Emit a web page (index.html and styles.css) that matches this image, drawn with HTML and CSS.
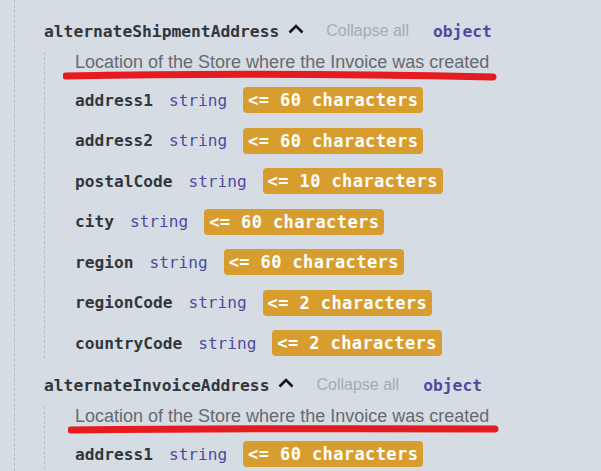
FILE: index.html
```html
<!DOCTYPE html>
<html>
<head>
<meta charset="utf-8">
<link rel="stylesheet" href="styles.css">
</head>
<body>
<div class="tree">
  <section class="prop">
    <div class="prop-head">
      <span class="name">alternateShipmentAddress</span>
      <svg class="chev" width="16" height="10" viewBox="0 0 16 10"><path d="M1.5 8.5 L8 2 L14.5 8.5" fill="none" stroke="#111" stroke-width="2.6"/></svg>
      <span class="collapse">Collapse all</span>
      <span class="type-obj">object</span>
    </div>
    <div class="children">
      <div class="desc">Location of the Store where the Invoice was created
        <svg class="mark" width="450" height="16" viewBox="0 0 450 16"><path d="M3 8 Q 200 4 430 9" fill="none" stroke="#e51b1f" stroke-width="7" stroke-linecap="round"/></svg>
      </div>
      <div class="row"><span class="key">address1</span><span class="type">string</span><span class="badge">&lt;= 60 characters</span></div>
      <div class="row"><span class="key">address2</span><span class="type">string</span><span class="badge">&lt;= 60 characters</span></div>
      <div class="row"><span class="key">postalCode</span><span class="type">string</span><span class="badge">&lt;= 10 characters</span></div>
      <div class="row"><span class="key">city</span><span class="type">string</span><span class="badge">&lt;= 60 characters</span></div>
      <div class="row"><span class="key">region</span><span class="type">string</span><span class="badge">&lt;= 60 characters</span></div>
      <div class="row"><span class="key">regionCode</span><span class="type">string</span><span class="badge">&lt;= 2 characters</span></div>
      <div class="row"><span class="key">countryCode</span><span class="type">string</span><span class="badge">&lt;= 2 characters</span></div>
    </div>
  </section>
  <section class="prop">
    <div class="prop-head">
      <span class="name">alternateInvoiceAddress</span>
      <svg class="chev" width="16" height="10" viewBox="0 0 16 10"><path d="M1.5 8.5 L8 2 L14.5 8.5" fill="none" stroke="#111" stroke-width="2.6"/></svg>
      <span class="collapse">Collapse all</span>
      <span class="type-obj">object</span>
    </div>
    <div class="children">
      <div class="desc">Location of the Store where the Invoice was created
        <svg class="mark mark2" width="450" height="16" viewBox="0 0 450 16"><path d="M3 9 Q 200 7 427 8" fill="none" stroke="#e51b1f" stroke-width="7" stroke-linecap="round"/></svg>
      </div>
      <div class="row"><span class="key">address1</span><span class="type">string</span><span class="badge">&lt;= 60 characters</span></div>
    </div>
  </section>
</div>
</body>
</html>
```
FILE: styles.css
```css
html, body {
  margin: 0;
  padding: 0;
  background: #d5dce3;
  overflow: hidden;
}
body {
  width: 601px;
  height: 471px;
}
.tree {
  margin-left: 14px;
  border-left: 1px dashed #b7bec6;
  padding-left: 29px;
  padding-top: 19px;
  height: 471px;
  box-sizing: border-box;
  overflow: hidden;
}
.prop-head {
  display: flex;
  align-items: center;
  height: 24px;
}
.name {
  font-family: "DejaVu Sans Mono", monospace;
  font-weight: bold;
  font-size: 16.3px;
  color: #32363c;
}
.chev {
  margin-left: 9px;
  margin-top: -5px;
}
.collapse {
  font-family: "Liberation Sans", Arial, sans-serif;
  font-size: 16px;
  color: #a8abb0;
  margin-left: 22px;
}
.type-obj {
  font-family: "DejaVu Sans Mono", monospace;
  font-weight: bold;
  font-size: 16.3px;
  color: #4e4a9f;
  margin-left: 24px;
}
.children {
  margin-top: 9px;
  border-left: 1px dashed #b7bec6;
  padding-left: 30px;
  padding-bottom: 2px;
  margin-bottom: 15px;
  display: flex;
  flex-direction: column;
  gap: 14.5px;
}
.desc {
  position: relative;
  font-family: "Liberation Sans", Arial, sans-serif;
  font-size: 18px;
  line-height: 20px;
  color: #676a6e;
  margin-bottom: 0.5px;
}
.mark {
  position: absolute;
  left: -12px;
  top: 16px;
}
.mark2 {
  left: -7px;
  top: 15px;
}
.row {
  display: flex;
  align-items: center;
  height: 26px;
  gap: 16px;
}
.key {
  font-family: "DejaVu Sans Mono", monospace;
  font-weight: bold;
  font-size: 16.2px;
  color: #32363c;
}
.type {
  font-family: "DejaVu Sans Mono", monospace;
  font-size: 16.1px;
  color: #4e4a9f;
}
.badge {
  font-family: "DejaVu Sans Mono", monospace;
  font-weight: bold;
  font-size: 17px;
  letter-spacing: 0.4px;
  color: #ffffff;
  background: #d79e2f;
  border-radius: 4px;
  height: 26px;
  line-height: 26px;
  padding: 0 5px 0 5px;
}
```
